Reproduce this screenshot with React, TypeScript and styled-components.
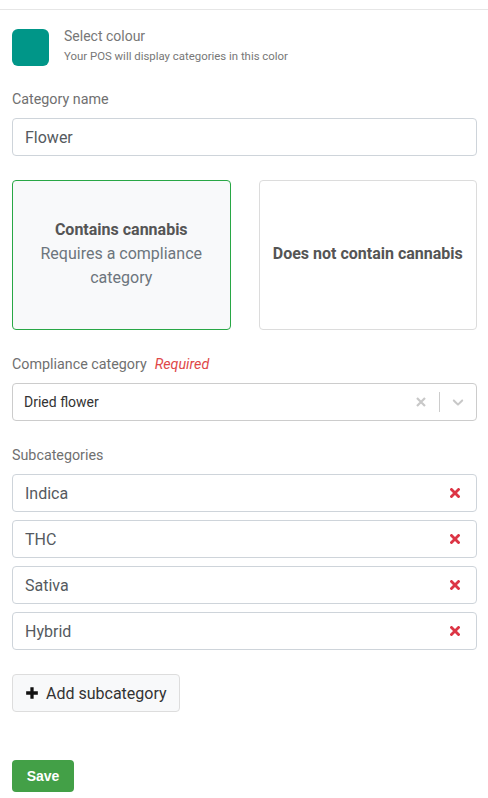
import React from "react";
import styled, { createGlobalStyle } from "styled-components";

const GlobalStyle = createGlobalStyle`
  body {
    margin: 0;
    background: #fff;
    font-family: Roboto, "Liberation Sans", Arial, sans-serif;
  }
  * { box-sizing: border-box; }
`;

const Page = styled.div`
  margin-top: 9px;
  border-top: 1px solid #e6e6e6;
  padding: 19px 11px 40px 12px;
`;

const ColourRow = styled.div`
  display: flex;
  align-items: flex-start;
  gap: 15px;
`;

const Swatch = styled.div<{ $color: string }>`
  width: 37px;
  height: 37px;
  border-radius: 6px;
  background: ${(p) => p.$color};
`;

const ColourText = styled.div`
  display: flex;
  flex-direction: column;
  margin-top: -3px;
`;

const ColourTitle = styled.div`
  font-size: 14px;
  line-height: 20px;
  color: #777;
`;

const ColourHint = styled.div`
  font-size: 11.4px;
  line-height: 16px;
  margin-top: 2px;
  color: #777;
`;

const Label = styled.div<{ $top: number }>`
  margin-top: ${(p) => p.$top}px;
  margin-bottom: 9px;
  font-size: 14.3px;
  line-height: 20px;
  color: #707070;
`;

const Required = styled.span`
  margin-left: 8px;
  font-style: italic;
  color: #e04848;
`;

const TextInput = styled.div`
  height: 38px;
  border: 1px solid #ced4da;
  border-radius: 4px;
  padding: 0 12px;
  display: flex;
  align-items: center;
  font-size: 16px;
  color: #555a60;
`;

const CardGrid = styled.div`
  margin-top: 24px;
  display: grid;
  grid-template-columns: 1fr 1fr;
  gap: 28px;
`;

const Card = styled.div<{ $active?: boolean }>`
  height: 150px;
  border: 1px solid ${(p) => (p.$active ? "#28a745" : "#dcdcdc")};
  background: ${(p) => (p.$active ? "#f8f9fa" : "#fff")};
  border-radius: 4px;
  display: flex;
  flex-direction: column;
  align-items: center;
  justify-content: center;
  text-align: center;
  padding: 0 2px 2px;
  white-space: nowrap;
`;

const CardTitle = styled.div`
  font-size: 16px;
  line-height: 24px;
  font-weight: 700;
  color: #555;
`;

const CardSub = styled.div`
  font-size: 16px;
  line-height: 24px;
  color: #6c757d;
  white-space: normal;
  max-width: 190px;
`;

const Select = styled.div`
  height: 38px;
  border: 1px solid #ccc;
  border-radius: 4px;
  display: flex;
  align-items: center;
  padding-left: 11px;
  font-size: 14px;
  color: #333;
`;

const SelectValue = styled.div`
  flex: 1;
`;

const Indicator = styled.div`
  width: 36px;
  height: 36px;
  display: flex;
  align-items: center;
  justify-content: center;
  color: #c8c8c8;
`;

const Separator = styled.div`
  width: 1px;
  height: 20px;
  background: #ccc;
`;

const SubList = styled.div`
  display: flex;
  flex-direction: column;
  gap: 8px;
`;

const SubRow = styled(TextInput)`
  justify-content: space-between;
  padding-right: 16px;
`;

const AddButton = styled.button`
  margin-top: 24px;
  height: 38px;
  padding: 0 12px;
  display: inline-flex;
  align-items: center;
  gap: 7px;
  background: #f8f9fa;
  border: 1px solid #dddddd;
  border-radius: 4px;
  font-family: Roboto, "Liberation Sans", Arial, sans-serif;
  font-size: 16px;
  color: #333;
`;

const SaveButton = styled.button`
  display: block;
  margin-top: 48px;
  width: 62px;
  height: 32px;
  border: none;
  border-radius: 4px;
  background: #43a047;
  color: #fff;
  font-family: "Liberation Sans", Arial, sans-serif;
  font-weight: 700;
  font-size: 14px;
`;

const RemoveX = () => (
  <svg width="10" height="10" viewBox="0 0 10 10">
    <path d="M1.5 1.5L8.5 8.5M8.5 1.5L1.5 8.5" stroke="#dc3545" strokeWidth="2.8" strokeLinecap="square" />
  </svg>
);

const subcategories = ["Indica", "THC", "Sativa", "Hybrid"];

export default function App() {
  return (
    <>
      <GlobalStyle />
      <Page>
        <ColourRow>
          <Swatch $color="#009688" />
          <ColourText>
            <ColourTitle>Select colour</ColourTitle>
            <ColourHint>Your POS will display categories in this color</ColourHint>
          </ColourText>
        </ColourRow>

        <Label $top={23}>Category name</Label>
        <TextInput>Flower</TextInput>

        <CardGrid>
          <Card $active>
            <CardTitle>Contains cannabis</CardTitle>
            <CardSub>Requires a compliance category</CardSub>
          </Card>
          <Card>
            <CardTitle>Does not contain cannabis</CardTitle>
          </Card>
        </CardGrid>

        <Label $top={24}>
          Compliance category<Required>Required</Required>
        </Label>
        <Select>
          <SelectValue>Dried flower</SelectValue>
          <Indicator>
            <svg width="12" height="12" viewBox="0 0 12 12">
              <path d="M2 2L10 10M10 2L2 10" stroke="currentColor" strokeWidth="2.2" />
            </svg>
          </Indicator>
          <Separator />
          <Indicator>
            <svg width="18" height="18" viewBox="0 0 20 20">
              <path
                fill="currentColor"
                d="M4.516 7.548c0.436-0.446 1.043-0.481 1.576 0l3.908 3.747 3.908-3.747c0.533-0.481 1.141-0.446 1.574 0 0.436 0.445 0.408 1.197 0 1.615-0.406 0.418-4.695 4.502-4.695 4.502-0.217 0.223-0.502 0.335-0.787 0.335s-0.57-0.112-0.789-0.335c0 0-4.287-4.084-4.695-4.502s-0.436-1.170 0-1.615z"
              />
            </svg>
          </Indicator>
        </Select>

        <Label $top={24}>Subcategories</Label>
        <SubList>
          {subcategories.map((s) => (
            <SubRow key={s}>
              {s}
              <RemoveX />
            </SubRow>
          ))}
        </SubList>

        <AddButton>
          <svg width="14" height="14" viewBox="0 0 12 12">
            <path d="M6 1V11M1 6H11" stroke="#111" strokeWidth="2.8" />
          </svg>
          Add subcategory
        </AddButton>

        <SaveButton>Save</SaveButton>
      </Page>
    </>
  );
}
